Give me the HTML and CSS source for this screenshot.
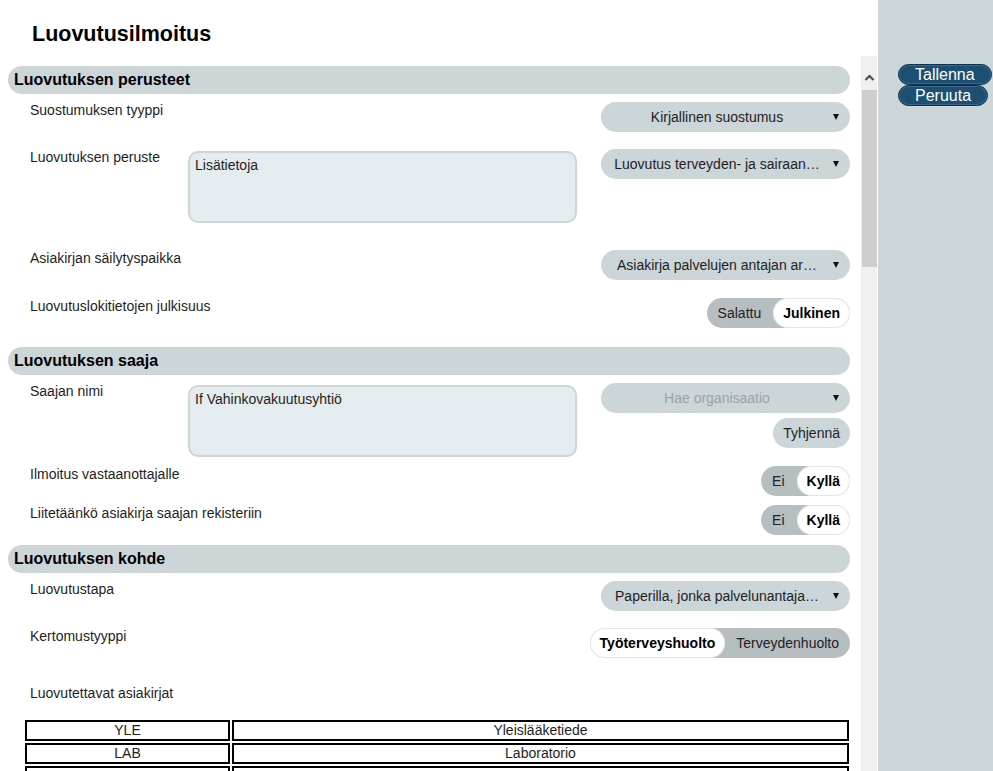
FILE: index.html
```html
<!DOCTYPE html>
<html lang="fi">
<head>
<meta charset="utf-8">
<title>Luovutusilmoitus</title>
<link rel="stylesheet" href="styles.css">
</head>
<body>
<div class="app">
  <main class="main">
    <h1 class="title">Luovutusilmoitus</h1>
    <div class="scroller">
      <div class="content">
        <h2 class="section-head">Luovutuksen perusteet</h2>

        <div class="row row--first">
          <div class="label">Suostumuksen tyyppi</div>
          <div class="controls">
            <div class="select"><span class="select-text">Kirjallinen suostumus</span><span class="caret"></span></div>
          </div>
        </div>

        <div class="row">
          <div class="label">Luovutuksen peruste</div>
          <textarea class="notes">Lisätietoja</textarea>
          <div class="controls">
            <div class="select"><span class="select-text">Luovutus terveyden- ja sairaan…</span><span class="caret"></span></div>
          </div>
        </div>

        <div class="row row--spaced">
          <div class="label">Asiakirjan säilytyspaikka</div>
          <div class="controls">
            <div class="select"><span class="select-text">Asiakirja palvelujen antajan ar…</span><span class="caret"></span></div>
          </div>
        </div>

        <div class="row row--toggle">
          <div class="label">Luovutuslokitietojen julkisuus</div>
          <div class="controls">
            <div class="toggle"><span class="opt">Salattu</span><span class="opt opt--on">Julkinen</span></div>
          </div>
        </div>

        <h2 class="section-head section-head--gap">Luovutuksen saaja</h2>

        <div class="row row--first">
          <div class="label">Saajan nimi</div>
          <textarea class="notes">If Vahinkovakuutusyhtiö</textarea>
          <div class="controls">
            <div class="select select--empty"><span class="select-text">Hae organisaatio</span><span class="caret"></span></div>
            <button class="pill-btn">Tyhjennä</button>
          </div>
        </div>

        <div class="row row--tight">
          <div class="label">Ilmoitus vastaanottajalle</div>
          <div class="controls">
            <div class="toggle"><span class="opt">Ei</span><span class="opt opt--on">Kyllä</span></div>
          </div>
        </div>

        <div class="row row--tight">
          <div class="label">Liitetäänkö asiakirja saajan rekisteriin</div>
          <div class="controls">
            <div class="toggle"><span class="opt">Ei</span><span class="opt opt--on">Kyllä</span></div>
          </div>
        </div>

        <h2 class="section-head">Luovutuksen kohde</h2>

        <div class="row row--first">
          <div class="label">Luovutustapa</div>
          <div class="controls">
            <div class="select"><span class="select-text">Paperilla, jonka palvelunantaja…</span><span class="caret"></span></div>
          </div>
        </div>

        <div class="row">
          <div class="label">Kertomustyyppi</div>
          <div class="controls">
            <div class="toggle"><span class="opt opt--on">Työterveyshuolto</span><span class="opt opt--wide">Terveydenhuolto</span></div>
          </div>
        </div>

        <div class="row row--spaced">
          <div class="label">Luovutettavat asiakirjat</div>
        </div>

        <table class="docs">
          <tr><td class="code">YLE</td><td>Yleislääketiede</td></tr>
          <tr><td class="code">LAB</td><td>Laboratorio</td></tr>
          <tr><td class="code">&nbsp;</td><td>&nbsp;</td></tr>
        </table>
      </div>
      <div class="scrollbar">
        <div class="sb-arrow">
          <svg width="11" height="7" viewBox="0 0 11 7"><polyline points="1.5,6 5.5,2 9.5,6" fill="none" stroke="#4f4f4f" stroke-width="2.2"/></svg>
        </div>
        <div class="sb-thumb"></div>
      </div>
    </div>
  </main>
  <aside class="side">
    <button class="action">Tallenna</button>
    <button class="action">Peruuta</button>
  </aside>
</div>
</body>
</html>
```

FILE: styles.css
```css
html, body {
  margin: 0;
  height: 100%;
}
body {
  font-family: "Liberation Sans", Arial, sans-serif;
  color: #1e1e1e;
  background: #fff;
  overflow: hidden;
}
.app {
  display: flex;
  height: 771px;
}
.main {
  width: 878px;
  flex: none;
  display: flex;
  flex-direction: column;
}
.title {
  margin: 0;
  padding: 22px 0 0 32px;
  height: 34px;
  font-size: 21.5px;
  line-height: 25px;
  font-weight: bold;
  color: #000;
}
.scroller {
  flex: 1;
  min-height: 0;
  display: flex;
  padding-right: 1px;
}
.content {
  flex: 1;
  overflow: hidden;
}
.scrollbar {
  width: 16px;
  flex: none;
  background: #f0f0f0;
  display: flex;
  flex-direction: column;
  align-items: center;
}
.sb-arrow {
  height: 34px;
  display: flex;
  justify-content: center;
}
.sb-arrow svg {
  margin-top: 18px;
}
.sb-thumb {
  width: 15px;
  height: 177px;
  background: #cdcdcd;
}

.section-head {
  margin: 10px 11px 0 8px;
  height: 28px;
  line-height: 28px;
  padding-left: 6px;
  border-radius: 14px;
  background: #ccd5d8;
  font-size: 16px;
  font-weight: bold;
  color: #000;
}
.section-head--gap {
  margin-top: 19px;
}

.row {
  display: flex;
  align-items: flex-start;
  padding: 0 11px 0 30px;
  margin-top: 17px;
  font-size: 14px;
}
.row--first { margin-top: 8px; }
.row--tight { margin-top: 9px; }
.row--spaced { margin-top: 27px; }
.row--toggle { margin-top: 18px; }

.label {
  width: 158px;
  flex: none;
  white-space: nowrap;
  line-height: 16px;
  color: #1e1e1e;
}
.notes {
  display: block;
  width: 389px;
  height: 72px;
  margin: 2px 0 0;
  box-sizing: border-box;
  border: 2px solid #ccd5d8;
  border-radius: 10px;
  background: #e5ecef;
  padding: 4px 5px;
  font-family: "Liberation Sans", Arial, sans-serif;
  font-size: 14px;
  line-height: 16px;
  color: #1e1e1e;
  resize: none;
  overflow: hidden;
  outline: none;
}
.controls {
  margin-left: auto;
  display: flex;
  flex-direction: column;
  align-items: flex-end;
  gap: 5px;
}

.select {
  width: 249px;
  height: 30px;
  box-sizing: border-box;
  border-radius: 15px;
  background: #ccd5d8;
  display: flex;
  align-items: center;
  padding: 0 11px 0 10px;
}
.select-text {
  flex: 1;
  min-width: 0;
  text-align: center;
  white-space: nowrap;
  overflow: hidden;
  text-overflow: ellipsis;
  line-height: 30px;
  color: #1e1e1e;
}
.select--empty .select-text {
  color: #9ba3a6;
}
.caret {
  flex: none;
  margin-left: 10px;
  width: 0;
  height: 0;
  border-left: 3.5px solid transparent;
  border-right: 3.5px solid transparent;
  border-top: 6px solid #111;
}

.pill-btn {
  height: 30px;
  padding: 0 10px;
  border: 0;
  border-radius: 15px;
  background: #ccd5d8;
  font-family: "Liberation Sans", Arial, sans-serif;
  font-size: 14px;
  color: #1e1e1e;
}

.toggle {
  display: flex;
  height: 30px;
  border-radius: 15px;
  background: #b6bec1;
  line-height: 30px;
  white-space: nowrap;
  font-size: 14px;
}
.opt {
  padding: 0 12px 0 11px;
  color: #222;
}
.opt--wide {
  padding: 0 11px;
}
.opt--on {
  padding: 0 10px;
  background: #fff;
  border-radius: 15px;
  font-weight: bold;
  color: #000;
  box-shadow: inset 0 0 0 1px #e2e6e8;
}

.docs {
  margin: 17px 10px 0 23px;
  width: 828px;
  border-collapse: separate;
  border-spacing: 2px;
  table-layout: fixed;
  font-size: 14px;
}
.docs td {
  box-sizing: border-box;
  height: 21px;
  padding: 0;
  border: 2px solid #000;
  text-align: center;
  line-height: 17px;
  color: #1e1e1e;
}
.docs .code {
  width: 205px;
}

.side {
  flex: 1;
  background: #cdd6d8;
  padding: 64px 0 0 20px;
  display: flex;
  flex-direction: column;
  align-items: flex-start;
}
.action {
  font-family: "Liberation Sans", Arial, sans-serif;
  font-size: 16px;
  line-height: 17px;
  color: #fff;
  background: #1c4f72;
  border: 1px solid #0c3350;
  border-radius: 11px;
  padding: 1px 16px;
  box-shadow: inset 0 0 0 1px rgba(110, 150, 180, 0.35);
  white-space: nowrap;
}
```
